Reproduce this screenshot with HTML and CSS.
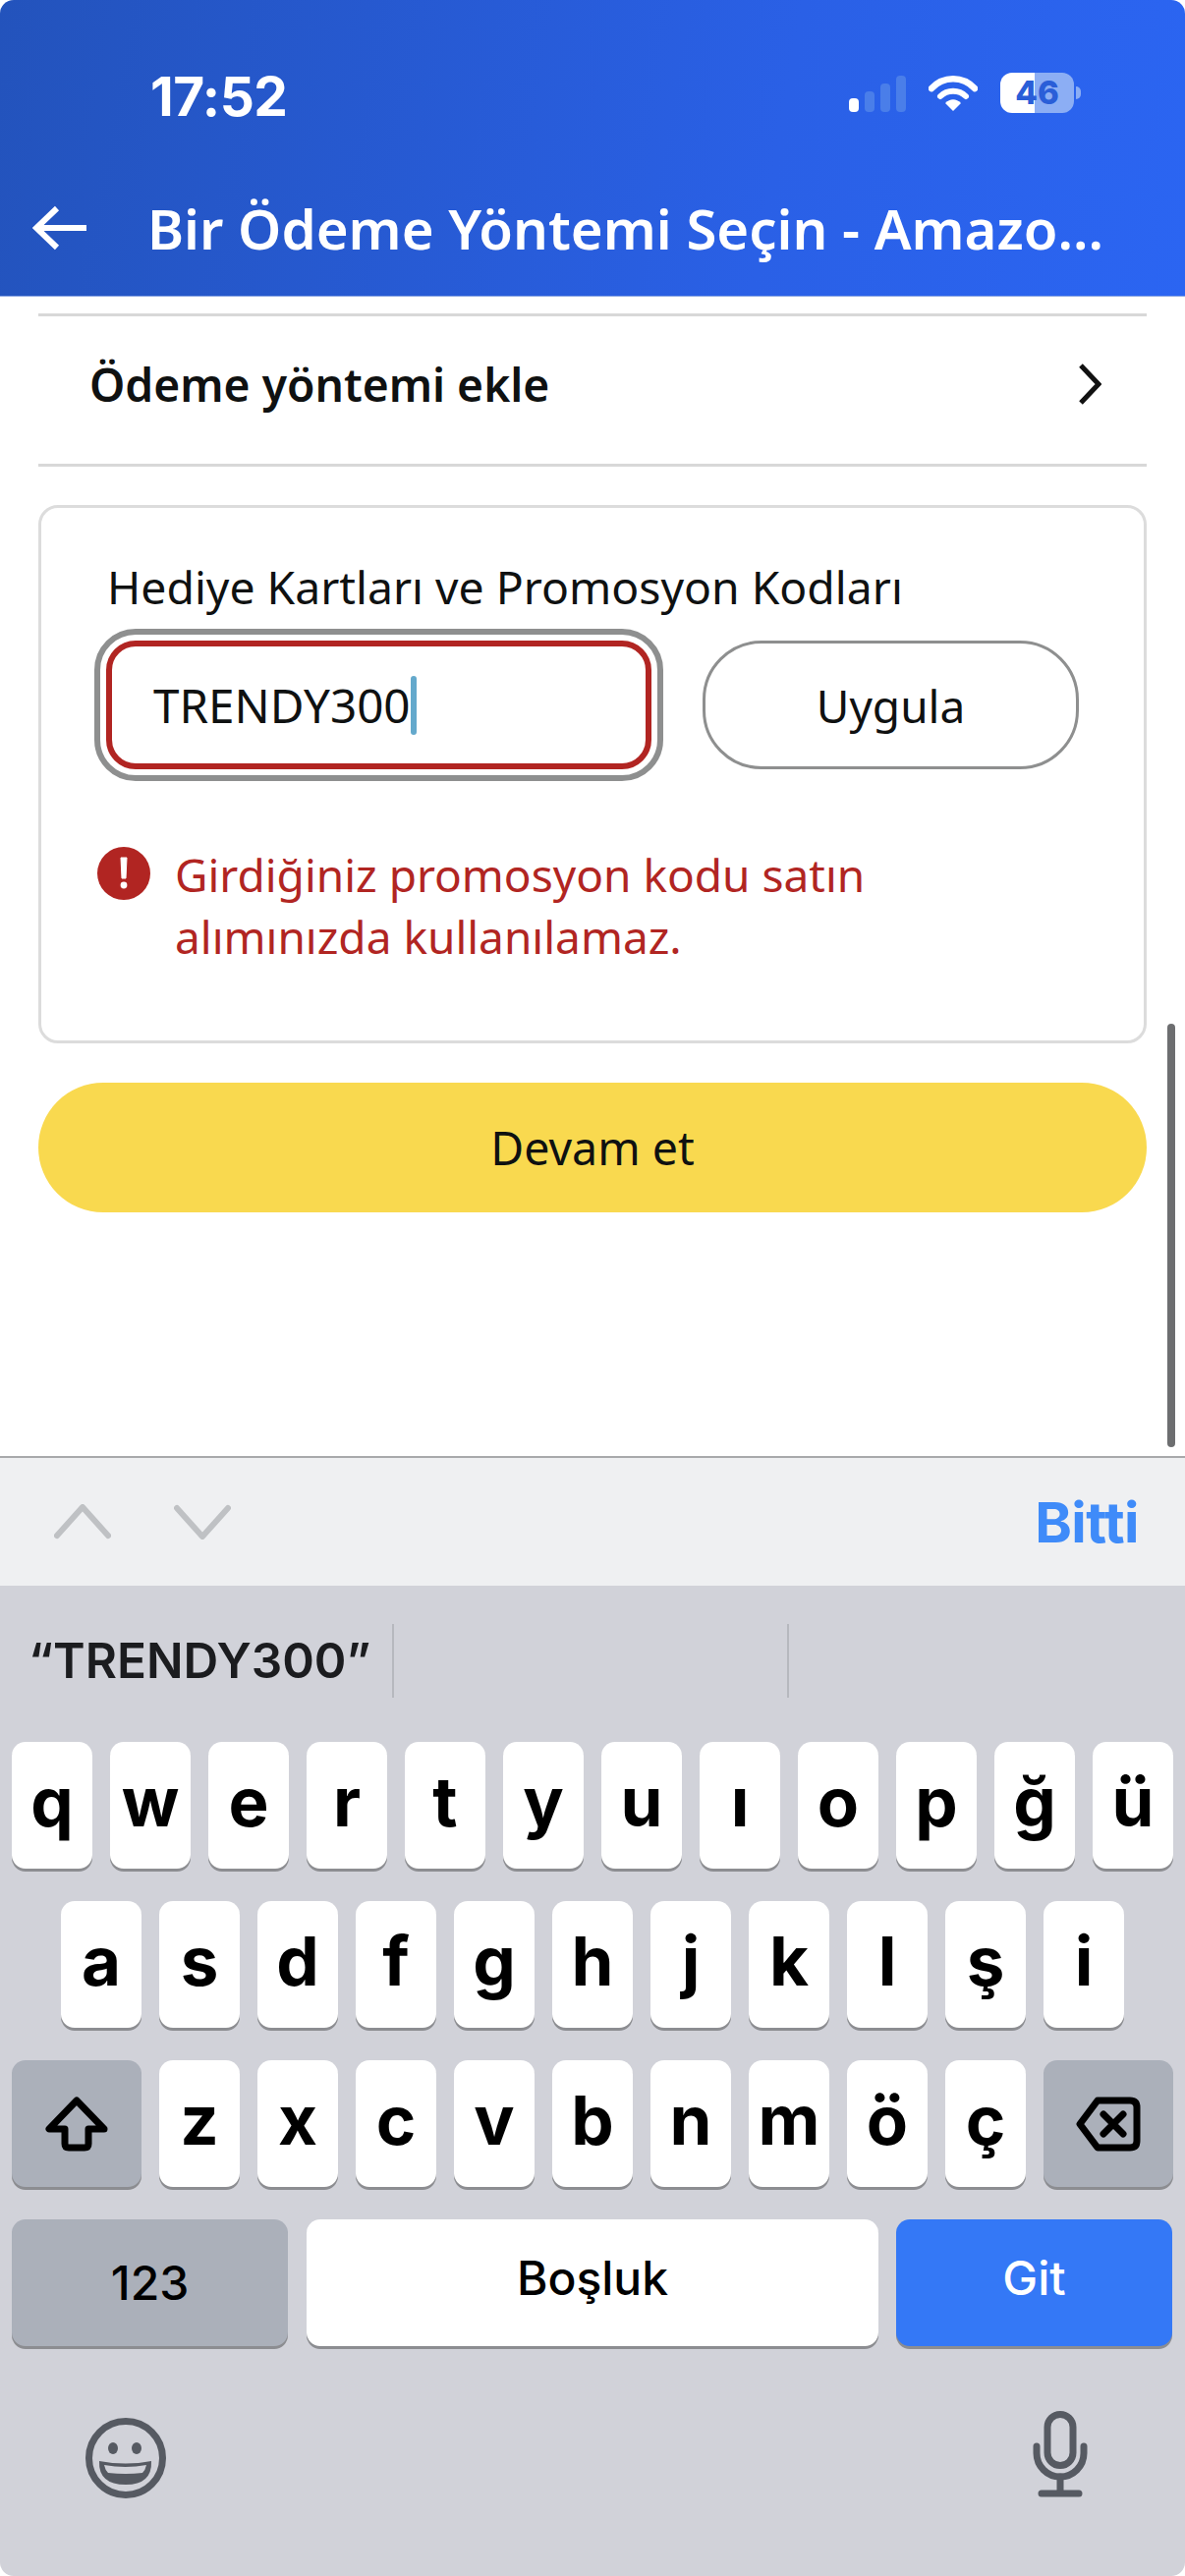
FILE: index.html
```html
<!DOCTYPE html>
<html lang="tr">
<head>
<meta charset="utf-8">
<title>Bir Ödeme Yöntemi Seçin</title>
<link rel="stylesheet" href="styles.css">
</head>
<body>
<div class="phone">
  <header class="header">
    <div class="status">
      <span class="time">17:52</span>
      <div class="status-icons">
        <div class="signal"><i class="bar b1"></i><i class="bar b2"></i><i class="bar b3"></i><i class="bar b4"></i></div>
        <svg class="wifi" width="50" height="38" viewBox="0 0 50 38"><path d="M3 14 C15 1 35 1 47 14" fill="none" stroke="#fff" stroke-width="6.5" stroke-linecap="round"/><path d="M12 22 C19 15 31 15 38 22" fill="none" stroke="#fff" stroke-width="6" stroke-linecap="round"/><path d="M17 29 C22 24 28 24 33 29 L25 37 Z" fill="#fff"/></svg>
        <div class="battery"><span class="battery-level">46</span><i class="battery-nub"></i></div>
      </div>
    </div>
    <div class="titlebar">
      <svg class="back" width="56" height="46" viewBox="0 0 56 46"><path d="M4 23H55M25 3L4 23L25 43" fill="none" stroke="#fff" stroke-width="6"/></svg>
      <h1 class="title">Bir Ödeme Yöntemi Seçin - Amazo...</h1>
    </div>
  </header>

  <main class="content">
    <div class="add-row">
      <span class="add-label">Ödeme yöntemi ekle</span>
      <svg width="24" height="42" viewBox="0 0 24 42"><path d="M3 2L21 21L3 40" fill="none" stroke="#111" stroke-width="5"/></svg>
    </div>

    <section class="card">
      <div class="card-label">Hediye Kartları ve Promosyon Kodları</div>
      <div class="controls">
        <div class="focus-ring">
          <div class="input"><span class="input-text">TRENDY300</span><i class="caret"></i></div>
        </div>
        <div class="apply">Uygula</div>
      </div>
      <div class="error">
        <svg class="error-icon" width="54" height="54" viewBox="0 0 54 54"><circle cx="27" cy="27" r="27" fill="#b12522"/><path d="M24 11h6l-1 21h-4z" fill="#fff" stroke="#fff" stroke-linejoin="round"/><circle cx="27" cy="39" r="3.4" fill="#fff"/></svg>
        <p class="error-text">Girdiğiniz promosyon kodu satın alımınızda kullanılamaz.</p>
      </div>
    </section>

    <div class="continue">Devam et</div>
    <i class="scrollbar"></i>
  </main>

  <div class="toolbar">
    <div class="nav-arrows">
      <svg width="58" height="36" viewBox="0 0 58 36"><path d="M3 32L29 3L55 32" fill="none" stroke="#bfc1c4" stroke-width="6" stroke-linecap="round" stroke-linejoin="round"/></svg>
      <svg width="58" height="36" viewBox="0 0 58 36"><path d="M3 4L29 33L55 4" fill="none" stroke="#bfc1c4" stroke-width="6" stroke-linecap="round" stroke-linejoin="round"/></svg>
    </div>
    <span class="done">Bitti</span>
  </div>

  <div class="keyboard">
    <div class="suggestions">
      <div class="suggestion">“TRENDY300”</div>
      <div class="suggestion"></div>
      <div class="suggestion last"></div>
    </div>
    <div class="row">
      <div class="key">q</div><div class="key">w</div><div class="key">e</div><div class="key">r</div><div class="key">t</div><div class="key">y</div><div class="key">u</div><div class="key">ı</div><div class="key">o</div><div class="key">p</div><div class="key">ğ</div><div class="key">ü</div>
    </div>
    <div class="row row-mid">
      <div class="key">a</div><div class="key">s</div><div class="key">d</div><div class="key">f</div><div class="key">g</div><div class="key">h</div><div class="key">j</div><div class="key">k</div><div class="key">l</div><div class="key">ş</div><div class="key">i</div>
    </div>
    <div class="row">
      <div class="key mod shift">
        <svg width="66" height="56" viewBox="0 0 66 56"><path d="M33 4L5 33H21V48Q21 52 25 52H41Q45 52 45 48V33H61Z" fill="none" stroke="#000" stroke-width="7" stroke-linejoin="round"/></svg>
      </div>
      <div class="key">z</div><div class="key">x</div><div class="key">c</div><div class="key">v</div><div class="key">b</div><div class="key">n</div><div class="key">m</div><div class="key">ö</div><div class="key">ç</div>
      <div class="key mod shift">
        <svg width="66" height="56" viewBox="0 0 66 56"><path d="M4 28L22 4H55Q62 4 62 11V45Q62 52 55 52H22Z" fill="none" stroke="#000" stroke-width="7" stroke-linejoin="round"/><path d="M28 18L48 38M48 18L28 38" fill="none" stroke="#000" stroke-width="7" stroke-linecap="round"/></svg>
      </div>
    </div>
    <div class="row">
      <div class="key mod wide num">123</div>
      <div class="key space">Boşluk</div>
      <div class="key go wide">Git</div>
    </div>
    <div class="kb-bottom">
      <svg class="emoji" width="82" height="82" viewBox="0 0 82 82"><circle cx="41" cy="41" r="37.5" fill="none" stroke="#565a62" stroke-width="7"/><ellipse cx="28" cy="31" rx="5" ry="6" fill="#565a62"/><ellipse cx="52" cy="31" rx="5" ry="6" fill="#565a62"/><path d="M14 44Q41 49 67 44Q68 68 41 68Q13 68 14 44Z" fill="#565a62"/><path d="M19 48Q41 52 62 48Q61 53 58 56Q41 58 23 56Q20 53 19 48Z" fill="#d1d2d9"/></svg>
      <svg width="62" height="88" viewBox="0 0 62 88"><rect x="18" y="3.5" width="26" height="52" rx="13" fill="none" stroke="#565a62" stroke-width="7"/><path d="M7 36V43A24 24 0 0 0 55 43V36" fill="none" stroke="#565a62" stroke-width="7" stroke-linecap="round"/><path d="M31 67V84M12 84H50" fill="none" stroke="#565a62" stroke-width="7" stroke-linecap="round"/></svg>
    </div>
  </div>
</div>
</body>
</html>
```

FILE: styles.css
```css
* { box-sizing: border-box; }
html, body { margin: 0; padding: 0; background: #fff; }
.phone {
  width: 1206px;
  height: 2622px;
  display: flex;
  flex-direction: column;
  overflow: hidden;
  border-radius: 14px;
  background: #fff;
  font-family: "Noto Sans", sans-serif;
}

/* header */
.header {
  height: 302px;
  flex: none;
  background: linear-gradient(100deg, #2353bc 0%, #2a60e6 65%, #2b65f2 100%);
  border-bottom: 1px solid #8ba6e2;
  display: flex;
  flex-direction: column;
}
.status {
  height: 200px;
  padding: 68px 113px 0 153px;
  display: flex;
  justify-content: space-between;
  align-items: flex-start;
  flex: none;
}
.time {
  font-family: Inter, sans-serif;
  font-weight: 700;
  font-size: 55px;
  line-height: 60px;
  color: #fff;
  letter-spacing: -0.5px;
}
.status-icons { display: flex; align-items: center; gap: 23px; padding-top: 6px; }
.signal { display: flex; align-items: flex-end; gap: 6px; height: 37px; margin-top: 2px; }
.bar { display: block; width: 10px; border-radius: 4px; background: #4a7ee9; }
.b1 { height: 14px; background: #fff; }
.b2 { height: 21px; }
.b3 { height: 29px; }
.b4 { height: 37px; }
.battery {
  position: relative;
  width: 75px;
  height: 41px;
  border-radius: 12px;
  background: linear-gradient(90deg, #fff 0 47%, #8caef4 47% 100%);
  text-align: center;
  font-family: Inter, sans-serif;
  font-weight: 800;
  font-size: 33px;
  line-height: 41px;
  color: #2a5ed8;
}
.battery-nub {
  position: absolute;
  right: -7px;
  top: 14px;
  width: 5px;
  height: 13px;
  border-radius: 0 6px 6px 0;
  background: #8caef4;
}
.titlebar { display: flex; align-items: center; padding-left: 33px; height: 60px; margin-top: 2px; flex: none; }
.back { flex: none; margin-right: 61px; }
.title {
  margin: 0;
  font-size: 56.3px;
  font-weight: 600;
  line-height: 60px;
  color: #fff;
  white-space: nowrap;
}

/* content */
.content {
  position: relative;
  flex: 1;
  padding: 17px 39px 0;
}
.add-row {
  height: 156px;
  border-top: 3px solid #d8d8d8;
  border-bottom: 3px solid #d8d8d8;
  padding: 0 46px 12px 52px;
  display: flex;
  align-items: center;
  justify-content: space-between;
}
.add-label { font-size: 46.2px; font-weight: 600; color: #0f1111; }
.card {
  margin-top: 39px;
  height: 548px;
  border: 3px solid #dcdcdc;
  border-radius: 20px;
  padding: 51px 0 0 54px;
}
.card-label { margin-left: 13px; font-size: 46.3px; line-height: 60px; color: #0f1111; white-space: nowrap; }
.controls { display: flex; align-items: center; gap: 40px; margin-top: 12px; }
.focus-ring {
  width: 579px;
  height: 155px;
  border: 6px solid #8e8f8f;
  border-radius: 42px;
  padding: 6px;
}
.input {
  height: 131px;
  border: 6px solid #b12522;
  border-radius: 30px;
  padding: 0 0 0 42px;
  display: flex;
  align-items: center;
}
.input-text { font-size: 47.6px; color: #0f1111; }
.caret { display: block; width: 6px; height: 60px; border-radius: 3px; background: #64a9cc; }
.apply {
  width: 383px;
  height: 131px;
  border: 3px solid #8e8f8f;
  border-radius: 60px;
  display: flex;
  align-items: center;
  justify-content: center;
  font-size: 46px;
  color: #0f1111;
}
.error { display: flex; gap: 25px; margin-top: 64px; padding-left: 3px; }
.error-icon { flex: none; margin-top: 3px; }
.error-text { margin: 0; width: 800px; font-size: 46px; line-height: 63px; color: #b12522; }
.continue {
  margin-top: 40px;
  height: 132px;
  border-radius: 66px;
  background: #f9d94f;
  display: flex;
  align-items: center;
  justify-content: center;
  font-size: 46.5px;
  color: #0f1111;
}
.scrollbar {
  position: absolute;
  right: 10px;
  top: 740px;
  width: 8px;
  height: 431px;
  border-radius: 4px;
  background: #6d6e70;
}

/* accessory toolbar */
.toolbar {
  height: 132px;
  flex: none;
  background: #eff0f2;
  border-top: 2px solid #a8a9ab;
  display: flex;
  align-items: center;
  justify-content: space-between;
  padding: 0 47px 0 55px;
}
.nav-arrows { display: flex; gap: 64px; margin-bottom: 0; }
.done { font-family: Inter, sans-serif; font-weight: 700; font-size: 57px; letter-spacing: -0.5px; color: #3f8bf9; }

/* keyboard */
.keyboard {
  height: 1008px;
  flex: none;
  background: #d1d2d9;
  font-family: Inter, sans-serif;
  color: #000;
}
.suggestions { height: 159px; display: flex; padding-top: 39px; align-items: flex-start; }
.suggestion {
  width: 402px;
  height: 75px;
  border-right: 2px solid #b6b8be;
  padding-left: 29px;
  font-size: 49.5px;
  font-weight: 600;
  line-height: 75px;
  color: #1b1c1f;
  white-space: nowrap;
}
.suggestion:first-child { width: 401px; }
.suggestion.last { border-right: 0; }
.row { display: flex; align-items: flex-start; gap: 18px; padding: 0 12px; margin-bottom: 31px; height: 131px; }
.row-mid { padding-left: 62px; }
.key {
  width: 82px;
  height: 129px;
  flex: none;
  border-radius: 14px;
  background: #fff;
  box-shadow: 0 3px 0 #8c8d91;
  display: flex;
  align-items: center;
  justify-content: center;
  font-size: 69px;
  font-weight: 700;
  line-height: 1;
  padding-bottom: 7px;
}
.key.mod { background: #abb0ba; }
.shift { width: 132px; padding-bottom: 0; }
.wide { width: 281px; }
.key.num, .key.space, .key.go { font-size: 48px; font-weight: 500; padding-bottom: 10px; }
.key.num { padding-bottom: 0; }
.space { width: 582px; margin-left: 1px; }
.go { background: #3478f6; color: #fff; }
.kb-bottom {
  display: flex;
  justify-content: space-between;
  align-items: flex-start;
  padding: 33px 96px 0 87px;
}
.emoji { margin-top: 7px; }
```
